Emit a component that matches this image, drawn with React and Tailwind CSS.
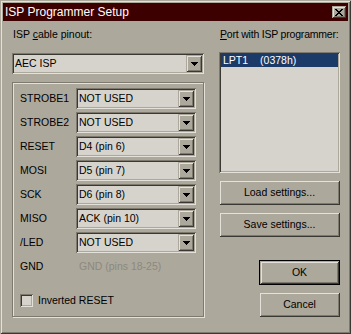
import React from 'react';

const face = 'bg-[#ada89c]';
const sunken = 'shadow-[inset_1px_1px_0_#7d796f,inset_-1px_-1px_0_#e4e1da,inset_2px_2px_0_#3a3833,inset_-2px_-2px_0_#ada89c]';
const raised = 'shadow-[inset_1px_1px_0_#ada89c,inset_-1px_-1px_0_#3a3833,inset_2px_2px_0_#e4e1da,inset_-2px_-2px_0_#7d796f]';

const Arrow = () => (
    <svg width="7" height="4" shapeRendering="crispEdges">
        <rect x="0" y="0" width="7" height="1" fill="#000" />
        <rect x="1" y="1" width="5" height="1" fill="#000" />
        <rect x="2" y="2" width="3" height="1" fill="#000" />
        <rect x="3" y="3" width="1" height="1" fill="#000" />
    </svg>
);

// combo box, sunken field + raised drop button
const Combo = ({ value, className = '' }) => (
    <div className={`flex h-[21px] p-[2px] bg-[#d6d3cc] ${sunken} ${className}`}>
        <div className="flex flex-1 items-center pl-[1px] whitespace-nowrap">{value}</div>
        <div className={`flex w-[16px] items-center justify-center ${face} ${raised}`}>
            <Arrow />
        </div>
    </div>
);

const Button = ({ children, isDefault, className = '' }) => (
    <div className={`flex h-[25px] items-center justify-center ${face} ${isDefault ? 'border border-black' : ''} ${className}`}>
        <div className={`flex h-full w-full items-center justify-center ${raised}`}>{children}</div>
    </div>
);

const pins = [
    ['STROBE1', 'NOT USED'],
    ['STROBE2', 'NOT USED'],
    ['RESET', 'D4 (pin 6)'],
    ['MOSI', 'D5 (pin 7)'],
    ['SCK', 'D6 (pin 8)'],
    ['MISO', 'ACK (pin 10)'],
    ['/LED', 'NOT USED'],
];

const App = () => {
    return (
        <div className={`flex h-[334px] w-[351px] flex-col p-[3px] ${face} text-[10.5px] leading-[13px] text-black font-['Liberation_Sans',Arial,sans-serif] shadow-[inset_1px_1px_0_#ada89c,inset_-1px_-1px_0_#3a3833,inset_2px_2px_0_#e4e1da,inset_-2px_-2px_0_#7d796f]`}>
            {/* title bar */}
            <div className="flex h-[18px] items-center justify-between bg-[#3c0000] pl-[2px] pr-[2px]">
                <span className="text-[12px] text-white">ISP Programmer Setup</span>
                <div className={`flex h-[12px] w-[14px] items-center justify-center ${face} ${raised}`}>
                    <svg width="8" height="7" shapeRendering="crispEdges">
                        <path d="M0 0h2l2 2.5 2-2.5h2L5 3.5 8 7H6L4 4.5 2 7H0l3-3.5z" fill="#000" />
                    </svg>
                </div>
            </div>

            <div className="flex pl-[9px]">
                {/* left side */}
                <div className="flex w-[192px] flex-col">
                    <div className="mt-[7px] h-[13px] pl-[1px] whitespace-nowrap">
                        ISP <u>c</u>able pinout:
                    </div>
                    <Combo value="AEC ISP" className="mt-[12px] w-[192px]" />

                    <div className="mt-[8px] h-[235px] border border-[#7d796f] pt-[5px] pl-[7px] pr-[7px] shadow-[inset_1px_1px_0_#e4e1da,1px_1px_0_#e4e1da]">
                        <div className="flex flex-col gap-[3px]">
                            {pins.map(([label, val]) => (
                                <div key={label} className="flex h-[21px] items-center">
                                    <span className="w-[56px]">{label}</span>
                                    <Combo value={val} className="w-[120px]" />
                                </div>
                            ))}
                            <div className="flex h-[21px] items-center">
                                <span className="w-[56px]">GND</span>
                                <span className="pl-[3px] text-[#8c887e]">GND (pins 18-25)</span>
                            </div>
                        </div>
                        <div className="mt-[17px] flex items-center">
                            <div className={`h-[13px] w-[13px] bg-[#d6d3cc] ${sunken}`} />
                            <span className="ml-[5px]">Inverted RESET</span>
                        </div>
                    </div>
                </div>

                {/* right side */}
                <div className="ml-[15px] flex w-[121px] flex-col">
                    <div className="mt-[7px] h-[13px] pl-[1px] whitespace-nowrap tracking-[-0.2px]">
                        <u>P</u>ort with ISP programmer:
                    </div>
                    <div className={`mt-[11px] h-[121px] p-[2px] bg-[#d6d3cc] ${sunken}`}>
                        <div className="flex h-[13px] items-center bg-[#1c3a68] pl-[2px] text-white">
                            <span>LPT1</span>
                            <span className="ml-[12px]">(0378h)</span>
                        </div>
                    </div>
                    <Button className="mt-[7px]">Load settings...</Button>
                    <Button className="mt-[7px]">Save settings...</Button>
                    <Button isDefault className="ml-[40px] mt-[23px] w-[81px]">OK</Button>
                    <Button className="ml-[40px] mt-[7px] w-[81px]">Cancel</Button>
                </div>
            </div>
        </div>
    );
};

export default App;
